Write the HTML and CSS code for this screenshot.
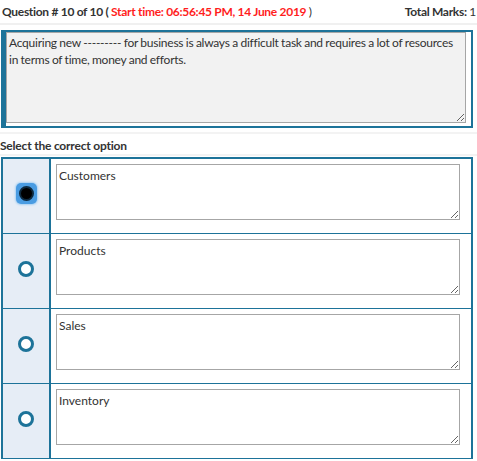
FILE: index.html
```html
<!DOCTYPE html>
<html lang="en">
<head>
    <meta charset="UTF-8">
    <title>Quiz</title>
    <link rel="stylesheet" href="styles.css">
</head>
<body>
    <div class="head">
        <div class="q-title">
            Question # 10 of 10 ( <span class="start">Start time: 06:56:45 PM, 14 June 2019</span> <span class="normal">)</span>
        </div>
        <div class="marks">Total Marks: <span class="normal">1</span></div>
    </div>

    <div class="question">
        <textarea class="q-text" readonly>Acquiring new --------- for business is always a difficult task and requires a lot of resources in terms of time, money and efforts.</textarea>
    </div>

    <div class="label">Select the correct option</div>

    <div class="options">
        <div class="row">
            <div class="pick"><span class="focus"><span class="radio checked"></span></span></div>
            <div class="answer"><textarea readonly>Customers</textarea></div>
        </div>
        <div class="row">
            <div class="pick"><span class="radio"></span></div>
            <div class="answer"><textarea readonly>Products</textarea></div>
        </div>
        <div class="row">
            <div class="pick"><span class="radio"></span></div>
            <div class="answer"><textarea readonly>Sales</textarea></div>
        </div>
        <div class="row">
            <div class="pick"><span class="radio"></span></div>
            <div class="answer"><textarea readonly>Inventory</textarea></div>
        </div>
    </div>
</body>
</html>
```

FILE: styles.css
```css
body {
    margin: 0;
    font-family: Lato, "Open Sans", sans-serif;
    color: #333;
    background: #fff;
}

.head {
    display: flex;
    justify-content: space-between;
    align-items: center;
    height: 23px;
    padding: 0 1px 0 2px;
    font-size: 12px;
    font-weight: bold;
    letter-spacing: -0.3px;
    border-bottom: 2px solid #f0f0f0;
}

.start {
    color: #ff1e1e;
}

.normal {
    font-weight: normal;
}

.question {
    margin: 5px 4px 0 1px;
    border: 2px solid #1d7399;
    border-left-width: 5px;
    padding: 0 5px 3px 0;
}

.q-text {
    display: block;
    box-sizing: border-box;
    width: 100%;
    height: 91px;
    margin: 0;
    padding: 1px 10px 1px 2px;
    border: 1px solid #a6a6a6;
    background: #f2f2f2;
    font-family: Lato, "Open Sans", sans-serif;
    font-size: 12px;
    letter-spacing: -0.25px;
    word-spacing: -0.3px;
    line-height: 17px;
    color: #333;
    resize: vertical;
}

.label {
    margin: 4px 0 1px 0;
    border-top: 2px solid #f3f3f3;
    border-bottom: 2px solid #f3f3f3;
    padding: 4px 0 1px 0;
    height: 15px;
    font-size: 12px;
    font-weight: bold;
    letter-spacing: -0.2px;
}

.options {
    margin: 0 4px 0 1px;
    border: 2px solid #1d7399;
    border-bottom: none;
}

.row {
    display: grid;
    grid-template-columns: 48px 1fr;
    height: 74px;
    border-bottom: 1px solid #1d7399;
}

.pick {
    background: #e6edf6;
    border-right: 2px solid #1d7399;
    display: flex;
    align-items: center;
    justify-content: center;
}

.radio {
    width: 10px;
    height: 10px;
    border: 3px solid #1d7399;
    border-radius: 50%;
    background: #fff;
    margin-bottom: 4px;
}

.focus {
    display: flex;
    padding: 3px;
    margin-bottom: 6px;
    border-radius: 5px;
    background: #4a9ce2;
    box-shadow: 0 0 2px 1px #a6d0f2;
}

.radio.checked {
    width: 11px;
    height: 11px;
    border: 2px solid #0d2a40;
    background: #000;
    margin: 0;
}

.answer {
    padding: 5px 11px 0 5px;
}

.answer textarea {
    display: block;
    box-sizing: border-box;
    width: 100%;
    height: 56px;
    margin: 0;
    padding: 3px 2px;
    border: 1px solid #a6a6a6;
    background: #fff;
    font-family: Lato, "Open Sans", sans-serif;
    font-size: 12px;
    line-height: 16px;
    color: #333;
    resize: vertical;
}
```
